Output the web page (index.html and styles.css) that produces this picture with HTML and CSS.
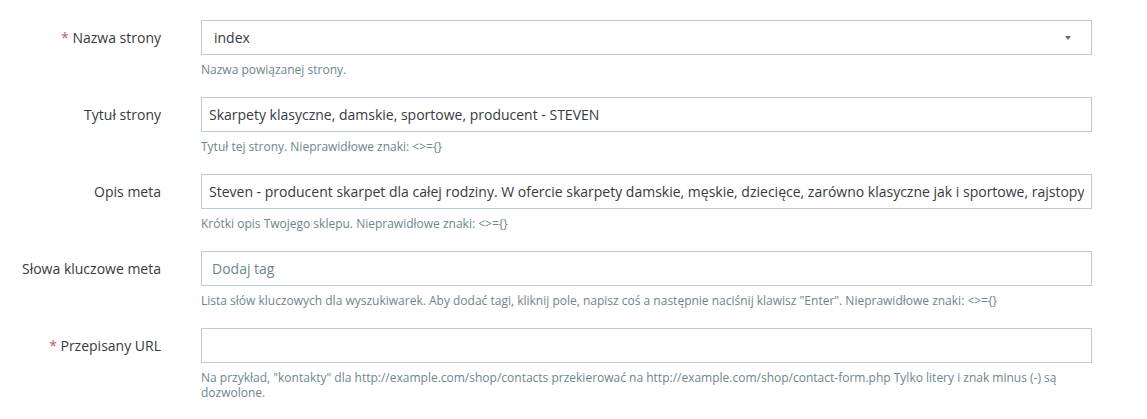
FILE: index.html
```html
<!DOCTYPE html>
<html lang="pl">
<head>
<meta charset="utf-8">
<title>Strona</title>
<link rel="stylesheet" href="styles.css">
</head>
<body>
<form class="form">
  <div class="row">
    <label class="label"><span class="req">*</span> Nazwa strony</label>
    <div class="field">
      <div class="control select"><span class="value">index</span><span class="caret"></span></div>
      <p class="help">Nazwa powiązanej strony.</p>
    </div>
  </div>
  <div class="row">
    <label class="label">Tytuł strony</label>
    <div class="field">
      <div class="control text"><span class="value">Skarpety klasyczne, damskie, sportowe, producent - STEVEN</span></div>
      <p class="help">Tytuł tej strony. Nieprawidłowe znaki: &lt;&gt;={}</p>
    </div>
  </div>
  <div class="row">
    <label class="label">Opis meta</label>
    <div class="field">
      <div class="control text"><span class="value">Steven - producent skarpet dla całej rodziny. W ofercie skarpety damskie, męskie, dziecięce, zarówno klasyczne jak i sportowe, rajstopy</span></div>
      <p class="help">Krótki opis Twojego sklepu. Nieprawidłowe znaki: &lt;&gt;={}</p>
    </div>
  </div>
  <div class="row">
    <label class="label">Słowa kluczowe meta</label>
    <div class="field">
      <div class="control tags"><span class="placeholder">Dodaj tag</span></div>
      <p class="help">Lista słów kluczowych dla wyszukiwarek. Aby dodać tagi, kliknij pole, napisz coś a następnie naciśnij klawisz "Enter". Nieprawidłowe znaki: &lt;&gt;={}</p>
    </div>
  </div>
  <div class="row">
    <label class="label"><span class="req">*</span> Przepisany URL</label>
    <div class="field">
      <div class="control text"><span class="value"></span></div>
      <p class="help">Na przykład, "kontakty" dla http://example.com/shop/contacts przekierować na http://example.com/shop/contact-form.php Tylko litery i znak minus (-) są dozwolone.</p>
    </div>
  </div>
</form>
</body>
</html>
```
FILE: styles.css
```css
html, body {
  margin: 0;
  padding: 0;
  background: #ffffff;
}
body {
  font-family: "Open Sans", "Noto Sans", sans-serif;
  color: #363a41;
}
.form {
  display: flex;
  flex-direction: column;
  gap: 20px;
  padding: 20px 0 0 0;
}
.row {
  display: grid;
  grid-template-columns: 161px 891px;
  column-gap: 40px;
  align-items: start;
}
.label {
  font-size: 14px;
  line-height: 35px;
  height: 35px;
  text-align: right;
  color: #363a41;
  white-space: nowrap;
}
.req {
  color: #c05c67;
}
.field {
  display: flex;
  flex-direction: column;
}
.control {
  box-sizing: border-box;
  height: 35px;
  border: 1px solid #bbcdd2;
  background: #fff;
  display: flex;
  align-items: center;
  font-size: 14px;
  color: #363a41;
  overflow: hidden;
  white-space: nowrap;
}
.text { padding: 0 7px; }
.select { padding: 0 20px 0 12px; justify-content: space-between; }
.tags { padding: 0 10px; }
.value { overflow: hidden; }
.placeholder { color: #6c868e; }
.caret {
  width: 0;
  height: 0;
  border-left: 3.5px solid transparent;
  border-right: 3.5px solid transparent;
  border-top: 4px solid #5e7177;
}
.help {
  margin: 7px 0 0 0;
  font-size: 12px;
  line-height: 15px;
  color: #6c868e;
}
```
